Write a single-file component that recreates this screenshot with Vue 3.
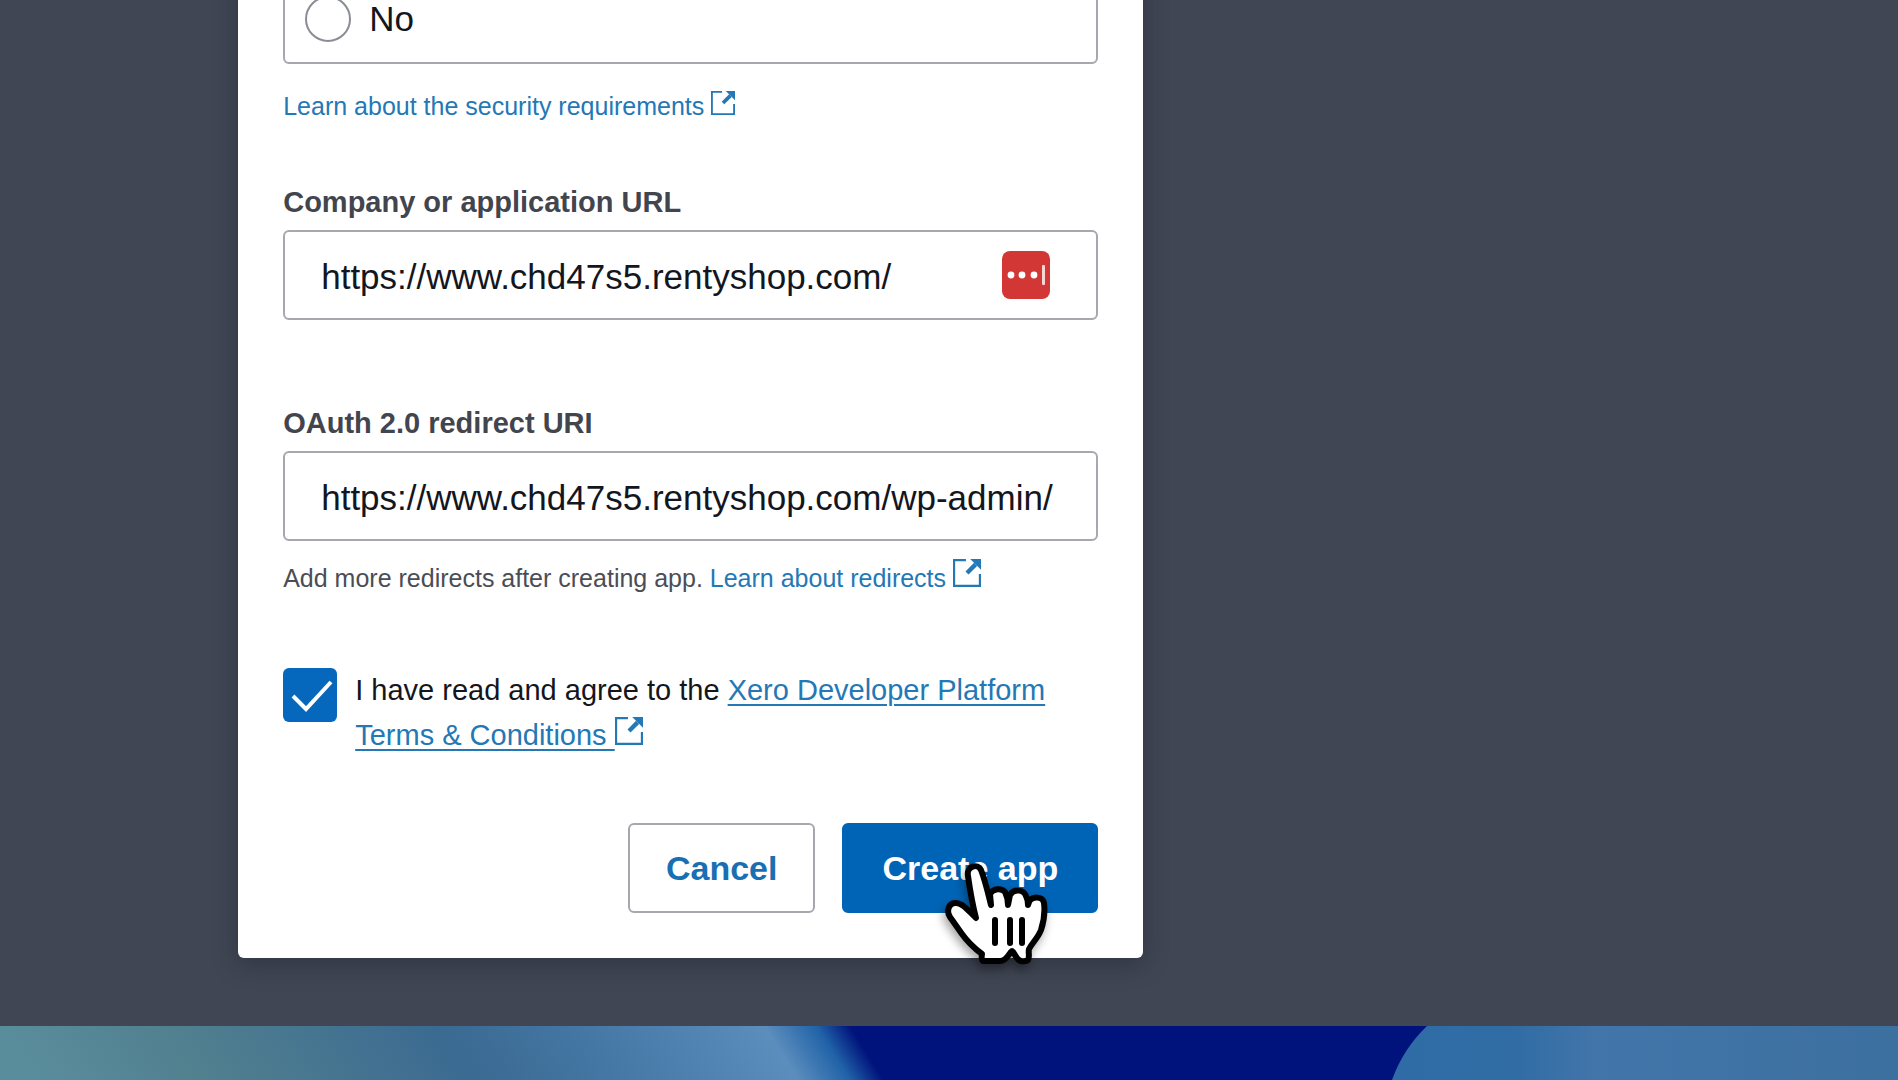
<script setup>
import { ref } from 'vue';

const security = ref('');
const companyUrl = ref('https://www.chd47s5.rentyshop.com/');
const redirectUri = ref('https://www.chd47s5.rentyshop.com/wp-admin/');
const agreed = ref(true);
</script>

<template>
  <div class="desktop">
    <main class="overlay">
      <form class="modal" @submit.prevent>
        <div class="option">
          <input id="no" v-model="security" type="radio" name="security" value="no" />
          <label for="no">No</label>
        </div>
        <p class="hint security">
          <a href="#">Learn about the security requirements
            <svg class="external" viewBox="0 0 26 26"><path d="M12 1H1v24h24V14" /><path class="shaft" d="M13 13l8-8" /><path class="head" d="M16 0h10v10z" /></svg></a>
        </p>

        <label class="title" for="company">Company or application URL</label>
        <div class="field">
          <input id="company" v-model="companyUrl" type="text" />
          <button class="manager" type="button" aria-label="Fill">
            <svg viewBox="0 0 48 48">
              <circle cx="9" cy="24" r="3.4" />
              <circle cx="20" cy="24" r="3.4" />
              <circle cx="32" cy="24" r="3.4" />
              <rect x="40" y="14" width="3" height="20" rx="1" opacity="0.8" />
            </svg>
          </button>
        </div>

        <label class="title second" for="redirect">OAuth 2.0 redirect URI</label>
        <div class="field">
          <input id="redirect" v-model="redirectUri" type="text" />
        </div>
        <p class="hint">
          Add more redirects after creating app.
          <a href="#">Learn about redirects
            <svg class="external large" viewBox="0 0 26 26"><path d="M12 1H1v24h24V14" /><path class="shaft" d="M13 13l8-8" /><path class="head" d="M16 0h10v10z" /></svg></a>
        </p>

        <div class="terms">
          <span class="check">
            <input id="agree" v-model="agreed" type="checkbox" />
            <svg v-if="agreed" viewBox="0 0 54 54"><path d="M10 28l13 13 25-27" /></svg>
          </span>
          <label for="agree">I have read and agree to the
            <a href="#">Xero Developer Platform
              <span class="nowrap">Terms &amp; Conditions
                <svg class="external large" viewBox="0 0 26 26"><path d="M12 1H1v24h24V14" /><path class="shaft" d="M13 13l8-8" /><path class="head" d="M16 0h10v10z" /></svg></span></a>
          </label>
        </div>

        <div class="actions">
          <button class="cancel" type="button">Cancel</button>
          <button class="create" type="submit">
            Create app
            <svg class="pointer" viewBox="0 0 102 102">
              <path d="M23 13C21 3 33 0 36 7C40 17 43 30 46 42L45 31C48 25 57 25 60 29C62 33 63 37 63 42L65 32C69 25 79 27 81 33Q83 37 83 42L84 39C87 33 98 33 99 40C100 48 99 58 96 67C93 75 87 80 84 86C83 90 85 93 83 97Q80 99 76 98C71 97 70 90 67 88C64 90 62 98 55 98H38Q36 97 37 91C29 85 22 78 17 71L5 54C1 48 4 40 10 40C16 39 22 46 31 55C27 40 25 27 23 13Z" />
              <path d="M50 57V80M65 57V80M77 57V80" />
            </svg>
          </button>
        </div>
      </form>
    </main>
    <div class="wallpaper">
      <svg viewBox="0 0 1898 54" preserveAspectRatio="none">
        <defs>
          <linearGradient id="left" gradientUnits="userSpaceOnUse" x1="0" x2="850" gradientTransform="skewX(32)">
            <stop offset="0" stop-color="#5a8d9c" />
            <stop offset="0.2" stop-color="#51808f" />
            <stop offset="0.52" stop-color="#3b6a92" />
            <stop offset="0.68" stop-color="#4477a4" />
            <stop offset="0.9" stop-color="#5b8dbd" />
            <stop offset="0.96" stop-color="#2163a8" />
            <stop offset="1" stop-color="#00137c" />
          </linearGradient>
          <linearGradient id="right">
            <stop offset="0" stop-color="#2f6ba6" />
            <stop offset="0.25" stop-color="#316da4" />
            <stop offset="0.4" stop-color="#4275aa" />
            <stop offset="1" stop-color="#3c709f" />
          </linearGradient>
        </defs>
        <rect width="1898" height="54" fill="#00137c" />
        <rect width="900" height="54" fill="url(#left)" />
        <path d="M1427 0H1898V54H1392Q1403 23 1427 0z" fill="url(#right)" />
      </svg>
    </div>
  </div>
</template>

<style>
body {
  margin: 0;
}
</style>

<style scoped>
* {
  box-sizing: border-box;
}

.desktop {
  display: flex;
  flex-direction: column;
  height: 100vh;
  overflow: hidden;
  background: #404653;
  color: #14161e;
  font-family: "Liberation Sans", Arial, sans-serif;
}

.overlay {
  display: flex;
  flex: 1;
  align-items: flex-end;
  min-height: 0;
  padding: 0 12.55% 68px;
}

.modal {
  width: 100%;
  max-width: 905px;
  padding: 45px;
  background: #fff;
  border-radius: 6px;
  box-shadow: 0 6px 24px rgba(20, 24, 36, 0.35);
}

.option {
  display: flex;
  align-items: center;
  gap: 18px;
  height: 90px;
  padding: 0 20px;
  border: 2px solid #a6a8ad;
  border-radius: 6px;
  font-size: 35px;
}

.option input {
  appearance: none;
  width: 46px;
  height: 46px;
  margin: 0;
  border: 2px solid #8b8d94;
  border-radius: 50%;
}

a {
  color: #2378b5;
  text-decoration: none;
}

.hint {
  margin: 0;
  padding-top: 18px;
  color: #4b4d56;
  font-size: 25px;
  line-height: 36px;
}

.hint.security {
  padding-top: 24px;
}

.external {
  width: 24px;
  height: 24px;
  fill: none;
  stroke: #2378b5;
  stroke-width: 2;
}

.external.large {
  width: 28px;
  height: 28px;
}

.external .shaft {
  stroke-width: 4;
}

.external .head {
  fill: #2378b5;
  stroke: none;
}

.title {
  display: block;
  margin: 60px 0 10px;
  color: #43454e;
  font-size: 29px;
  font-weight: bold;
  line-height: 36px;
}

.title.second {
  margin-top: 85px;
}

.field {
  display: flex;
  align-items: center;
  height: 90px;
  padding: 0 36px;
  border: 2px solid #a6a8ad;
  border-radius: 6px;
}

.field input {
  flex: 1;
  min-width: 0;
  padding: 4px 0 0;
  border: 0;
  outline: 0;
  background: none;
  color: #14161e;
  font-family: inherit;
  font-size: 35px;
}

.manager {
  width: 48px;
  height: 48px;
  margin-right: 10px;
  padding: 0;
  border: 0;
  border-radius: 8px;
  background: #d23735;
}

.manager svg {
  display: block;
  fill: #fff;
}

.terms {
  display: flex;
  gap: 18px;
  margin-top: 72px;
  font-size: 29px;
  line-height: 45px;
}

.terms a {
  text-decoration: underline;
  text-decoration-thickness: 2px;
  text-underline-offset: 4px;
}

.nowrap {
  white-space: nowrap;
}

.check {
  display: grid;
  flex: none;
  width: 54px;
  height: 54px;
}

.check input,
.check svg {
  grid-area: 1 / 1;
  width: 54px;
  height: 54px;
  margin: 0;
}

.check input {
  appearance: none;
  border: 2px solid #a6a8ad;
  border-radius: 6px;
}

.check input:checked {
  border: 0;
  background: #0568bd;
}

.check svg {
  fill: none;
  stroke: #fff;
  stroke-width: 4;
  pointer-events: none;
}

.actions {
  display: flex;
  justify-content: flex-end;
  gap: 27px;
  margin-top: 65px;
}

.actions button {
  height: 90px;
  padding: 0 36px;
  border: 2px solid #a6a8ad;
  border-radius: 6px;
  background: #fff;
  color: #1a6fb3;
  font-family: inherit;
  font-size: 34px;
  font-weight: bold;
}

.actions .create {
  position: relative;
  padding: 0 38px;
  border-color: #0064b6;
  background: #0064b6;
  color: #fff;
}

.pointer {
  position: absolute;
  top: 38px;
  left: 101px;
  width: 102px;
  height: 102px;
  overflow: visible;
  fill: #fff;
  stroke: #000;
  stroke-width: 6;
  stroke-linecap: round;
  stroke-linejoin: round;
  filter: drop-shadow(-2px 5px 5px rgba(0, 0, 0, 0.35));
}

.wallpaper {
  flex: none;
  height: 54px;
}

.wallpaper svg {
  display: block;
  width: 100%;
  height: 100%;
}
</style>
